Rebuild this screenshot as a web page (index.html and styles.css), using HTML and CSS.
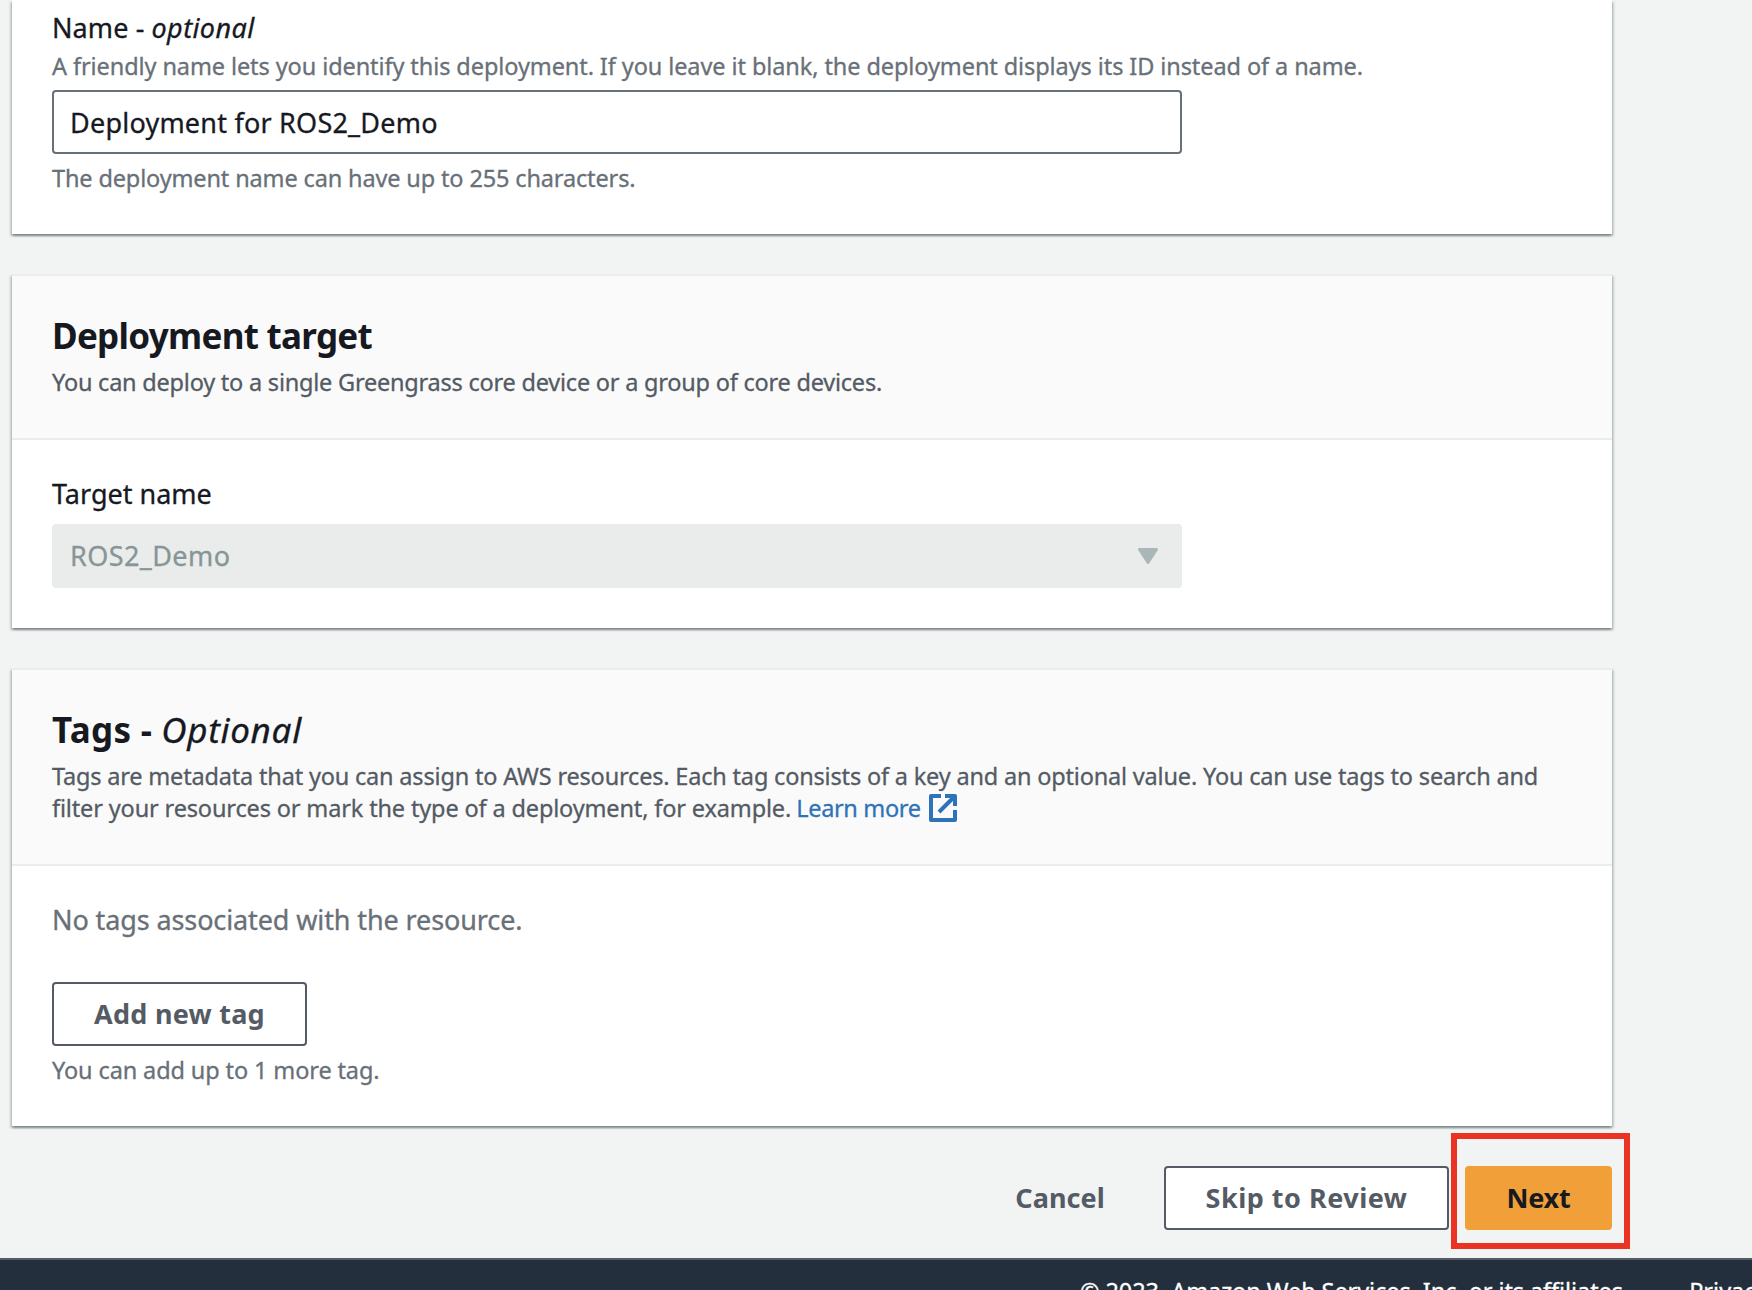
FILE: index.html
```html
<!DOCTYPE html>
<html lang="en">
<head>
<meta charset="utf-8">
<title>Create deployment</title>
<link rel="stylesheet" href="styles.css">
</head>
<body>
<main class="content">
  <section class="card card-name">
    <div class="label"><span class="t-name">Name -</span> <em class="t-opt">optional</em></div>
    <p class="hint t-friendly">A friendly name lets you identify this deployment. If you leave it blank, the deployment displays its ID instead of a name.</p>
    <div class="field input"><span class="t-input">Deployment for ROS2_Demo</span></div>
    <p class="hint hint-below t-limit">The deployment name can have up to 255 characters.</p>
  </section>

  <section class="card">
    <header class="card-header">
      <h2 class="t-target">Deployment target</h2>
      <p class="desc t-deploy">You can deploy to a single Greengrass core device or a group of core devices.</p>
    </header>
    <div class="card-body">
      <div class="label t-tname">Target name</div>
      <div class="field select"><span class="t-ros">ROS2_Demo</span>
        <svg class="caret" width="20" height="16" viewBox="0 0 20 16"><path d="M1.5 1.5h17L10 14.5z" fill="#aab7b8" stroke="#aab7b8" stroke-width="3" stroke-linejoin="round"/></svg>
      </div>
    </div>
  </section>

  <section class="card">
    <header class="card-header">
      <h2><span class="t-tags">Tags -</span> <em class="t-opt2">Optional</em></h2>
      <p class="desc"><span class="t-meta">Tags are metadata that you can assign to AWS resources. Each tag consists of a key and an optional value. You can use tags to search and</span><br><span class="t-filter">filter your resources or mark the type of a deployment, for example.</span> <a class="link"><span class="t-learn">Learn more</span><svg class="ext" width="28" height="28" viewBox="0 0 28 28" fill="none" stroke="#2e73b8" stroke-width="4"><path d="M12 2H2v24h24V16M16 2h10v10M25 3L10 18" stroke-linejoin="round"/></svg></a></p>
    </header>
    <div class="card-body">
      <p class="empty t-none">No tags associated with the resource.</p>
      <button class="btn btn-add t-add">Add new tag</button>
      <p class="hint hint-below t-more">You can add up to 1 more tag.</p>
    </div>
  </section>

  <div class="actions">
    <button class="btn btn-link t-cancel">Cancel</button>
    <button class="btn btn-skip t-skip">Skip to Review</button>
    <button class="btn btn-next t-next">Next</button>
  </div>
</main>
<footer class="footer"><span class="t-copy">© 2023, Amazon Web Services, Inc. or its affiliates.</span><span>Privacy</span></footer>
</body>
</html>
```
FILE: styles.css
```css
* { box-sizing: border-box; margin: 0; }
body { width: 1752px; height: 1290px; overflow: hidden; background: #f2f3f3; font-family: "Noto Sans", sans-serif; font-size: 27px; color: #16191f; -webkit-text-stroke: 0.3px; }
.content { width: 1600px; margin-left: 12px; display: flex; flex-direction: column; gap: 40px; }
.card { background: #fff; border-top: 2px solid #eaeded; box-shadow: 0 2px 2px 0 rgba(0,28,36,.3), 2px 2px 2px 0 rgba(0,28,36,.15), -2px 2px 2px 0 rgba(0,28,36,.15); }
.card-name { border-top: 0; padding: 6px 40px 40px; }
.card-name .label { line-height: 44px; margin: 0; }
.card-header { background: #fafafa; border-bottom: 2px solid #eaeded; padding: 38px 40px 40px; }
.card-body { padding: 34px 40px 40px; }
h2 { font-size: 35px; line-height: 44px; margin-bottom: 8px; font-weight: 700; -webkit-text-stroke: 0; }
h2 em { font-weight: 400; -webkit-text-stroke: 0.3px; }
.label { line-height: 40px; margin-bottom: 10px; white-space: nowrap; }
.hint, .desc { font-size: 23.5px; line-height: 32px; white-space: nowrap; }
.hint { color: #687078; }
.desc { color: #545b64; }
.hint-below { margin-top: 8px; }
.field { width: 1130px; height: 64px; border-radius: 4px; display: flex; align-items: center; justify-content: space-between; padding: 0 16px; border: 2px solid #687078; line-height: 40px; }
.input { margin-top: 8px; padding-top: 1px; }
.select { background: #eaeceb; border-color: #eaeceb; color: #879596; padding-right: 22px; }
.link { color: #2e73b8; margin-left: -1px; }
.ext { vertical-align: -5px; margin-left: 8px; }
.empty { color: #687078; line-height: 40px; margin-bottom: 42px; }
.btn { font: 700 27px/40px "Noto Sans", sans-serif; height: 64px; border: 2px solid #545b64; border-radius: 4px; background: #fff; color: #545b64; padding: 0; white-space: nowrap; display: block; -webkit-text-stroke: 0; }
.btn-add { width: 255px; }
.actions { display: flex; justify-content: flex-end; }
.btn-link { background: none; border-color: transparent; margin-right: 57px; }
.btn-skip { width: 285px; margin-right: 16px; }
.btn-next { position: relative; width: 147px; background: #f19f38; border-color: #f19f38; color: #16191f; }
.btn-next::after { content: ""; position: absolute; top: -35px; right: -20px; bottom: -21px; left: -16px; border: 6px solid #eb3323; }
.footer { margin-top: 28px; height: 60px; border-top: 2px solid #545b64; background: #242f3e; color: #fff; font-size: 23.5px; line-height: 32px; padding: 15px 0 0 1080px; white-space: nowrap; display: flex; gap: 60px; }

/* Per-string tracking */
.t-name { letter-spacing: 0.1px; }
.t-opt { letter-spacing: 0.4px; }
.t-friendly { letter-spacing: -0.09px; }
.t-input { letter-spacing: 0.22px; }
.t-limit { letter-spacing: -0.14px; }
.t-target { letter-spacing: -0.7px; }
.t-deploy { letter-spacing: -0.22px; }
.t-tname { letter-spacing: 0; }
.t-ros { letter-spacing: 0.42px; }
.t-tags { letter-spacing: 0.3px; }
.t-opt2 { letter-spacing: 0.7px; }
.t-meta { letter-spacing: -0.182px; }
.t-filter { letter-spacing: -0.145px; }
.t-learn { letter-spacing: -0.35px; }
.t-none { letter-spacing: -0.11px; }
.t-add { letter-spacing: 0.25px; }
.t-more { letter-spacing: -0.12px; }
.t-cancel { letter-spacing: 0.1px; }
.t-skip { letter-spacing: 0.5px; }
.t-next { letter-spacing: -0.2px; }
.t-copy { letter-spacing: -0.08px; }
```
